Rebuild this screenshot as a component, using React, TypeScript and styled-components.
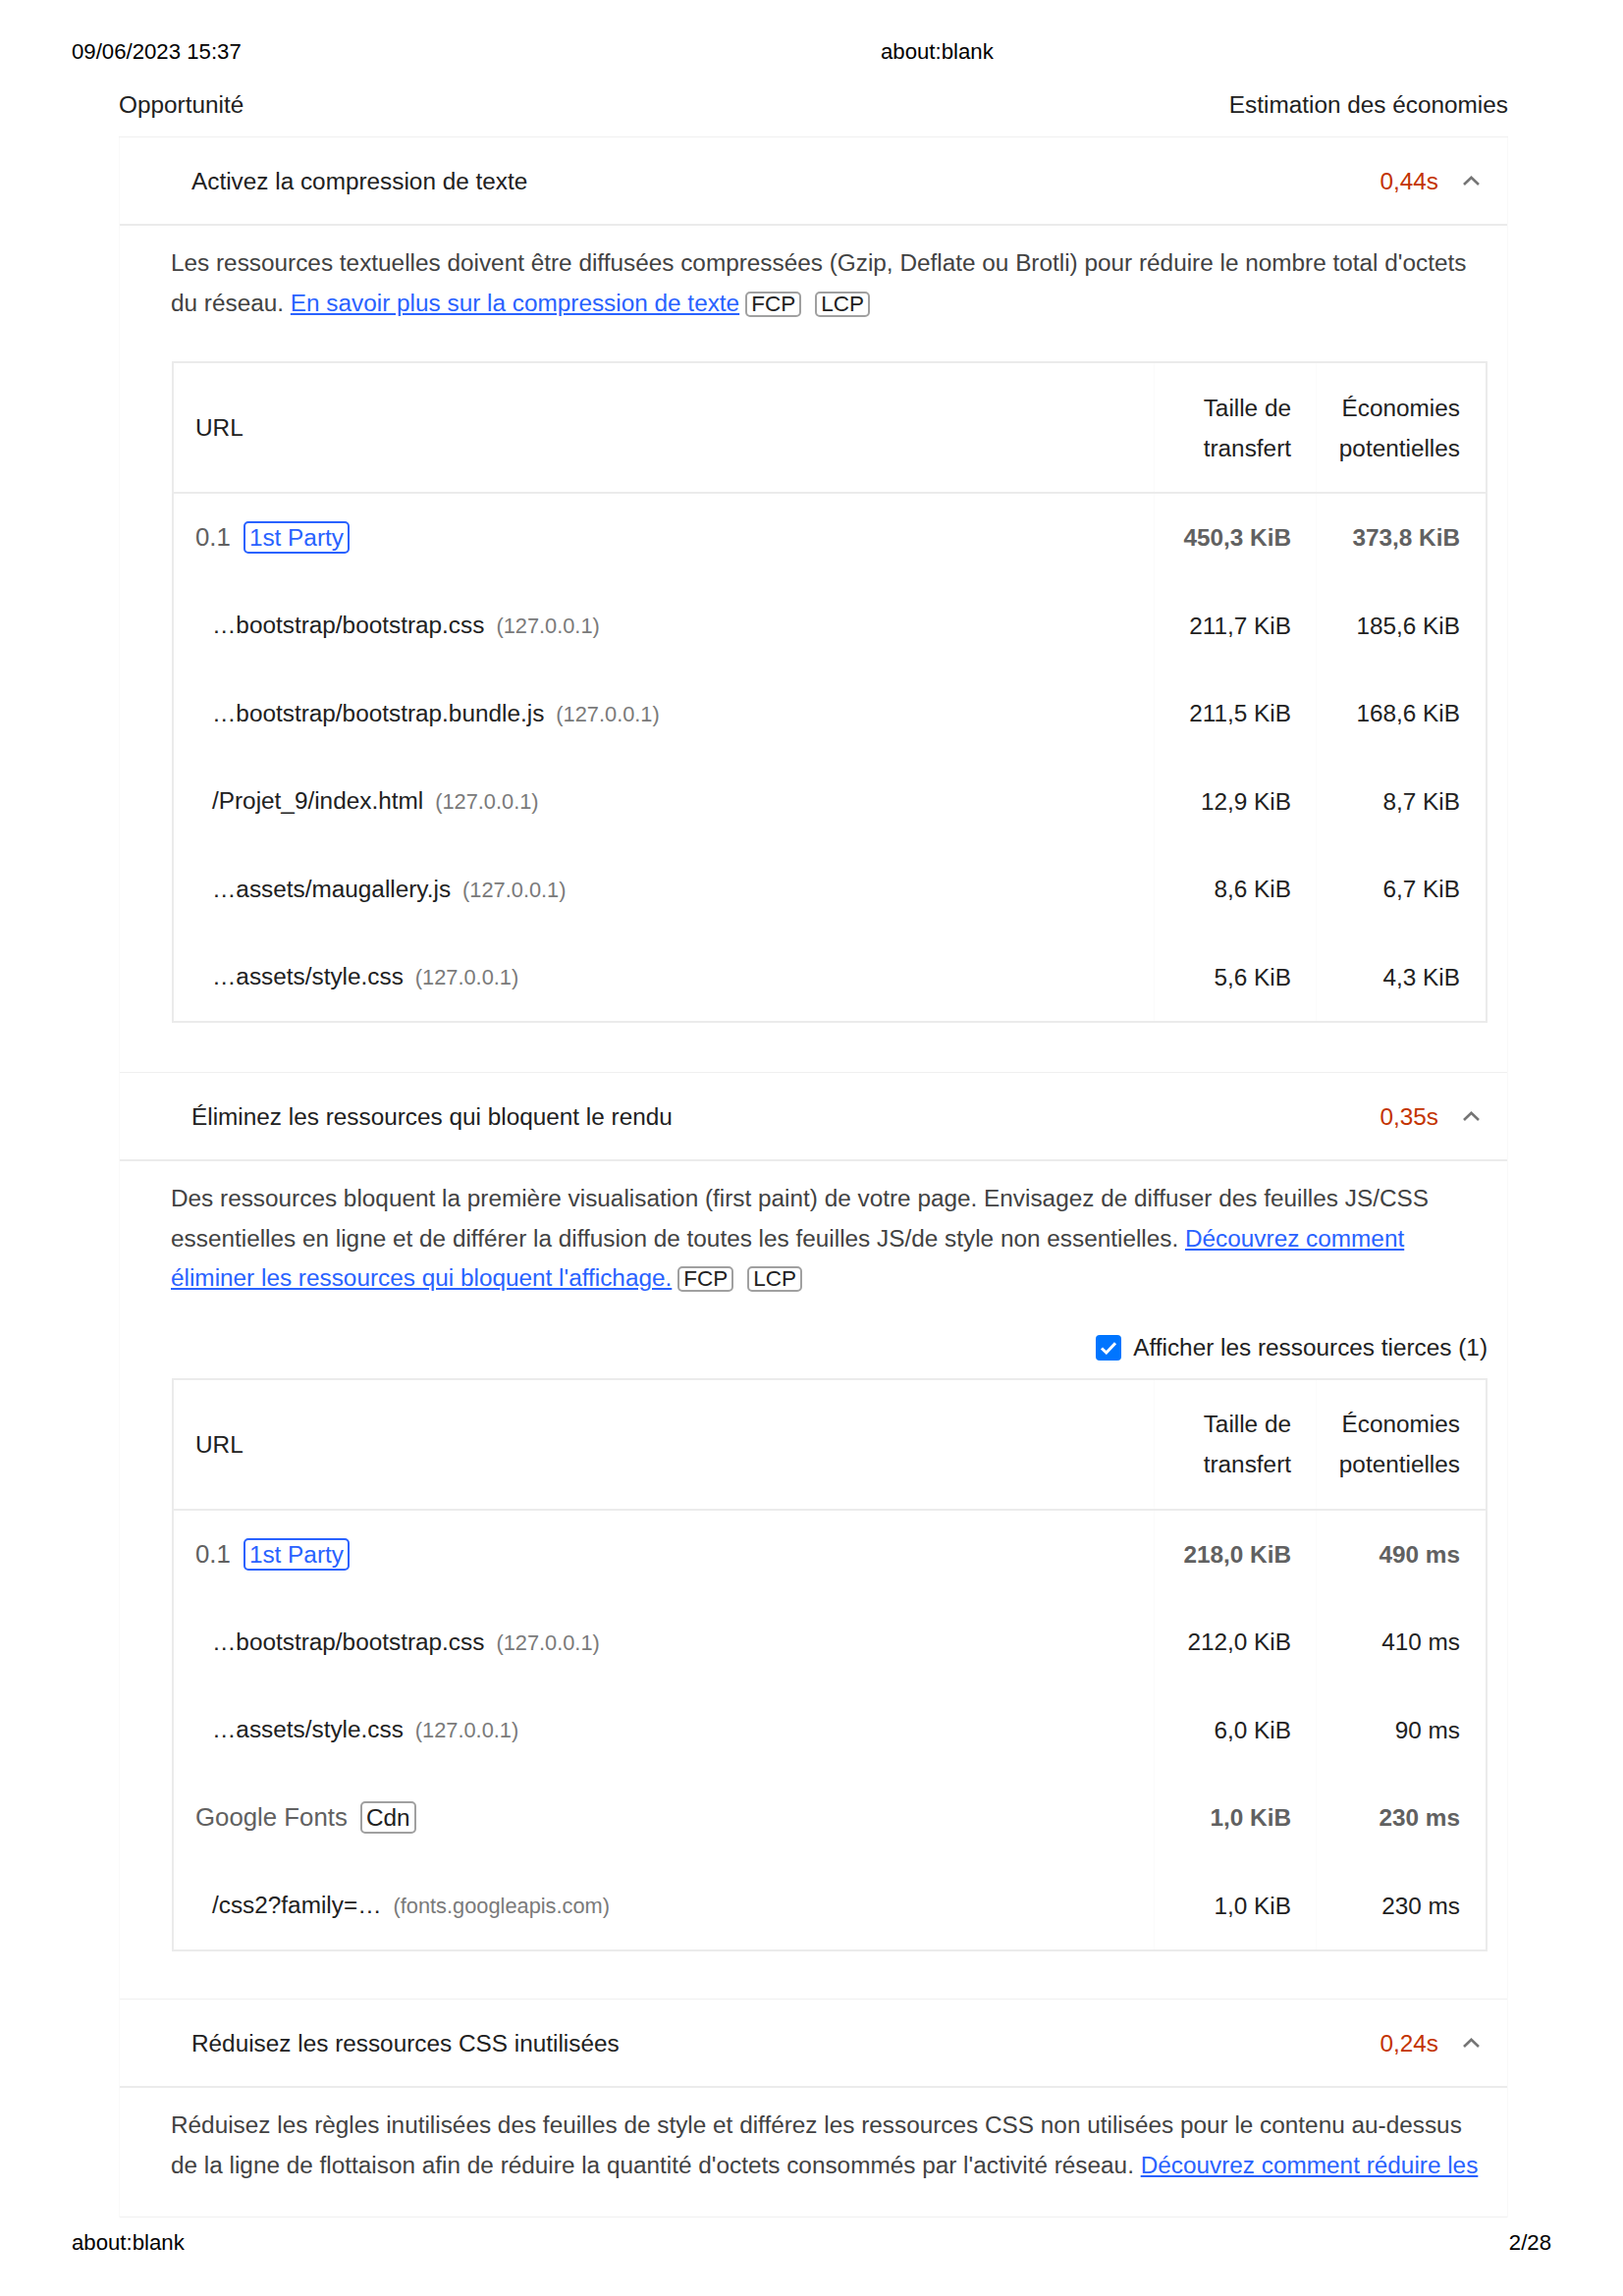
import React from 'react';
import styled, { createGlobalStyle } from 'styled-components';

const GlobalStyle = createGlobalStyle`
  html, body { margin: 0; padding: 0; background: #fff; }
  body { font-family: "Liberation Sans", Arial, Helvetica, sans-serif; color: #212121; }
  * { box-sizing: border-box; }
`;

const Page = styled.div`
  width: 1653px;
  height: 2339px;
  display: flex;
  flex-direction: column;
  overflow: hidden;
`;

const PrintBar = styled.div<{ $bottom?: boolean }>`
  display: grid;
  grid-template-columns: ${(p) => (p.$bottom ? '1fr auto' : '824px 1fr')};
  padding: ${(p) => (p.$bottom ? '0 73px 41px' : '40px 73px 0')};
  margin-top: ${(p) => (p.$bottom ? 'auto' : '0')};
  font-size: 22.2px;
  line-height: 26px;
  color: #000;
`;

const Content = styled.main`
  margin: 0 117px 0 121px;
  font-size: 24.35px;
`;

const GroupHeader = styled.div`
  display: flex;
  justify-content: space-between;
  padding: 20px 0 12px;
  line-height: 41px;
  color: #212121;
  border-bottom: 1px solid #f0f0f0;
`;

const AuditList = styled.div`
  border-left: 1px solid #f9f9f9;
  border-right: 1px solid #f9f9f9;
`;

const Audit = styled.section<{ $padBottom: number }>`
  padding-bottom: ${(p) => p.$padBottom}px;
  border-bottom: 1px solid #f0f0f0;
`;

const Summary = styled.div`
  display: flex;
  align-items: center;
  height: 90px;
  padding: 0 27px 0 73px;
  border-bottom: 2px solid #ebebeb;
  line-height: 41px;
`;

const SummaryTitle = styled.span`
  flex: 1;
  color: #212121;
`;

const SummaryValue = styled.span`
  color: #c33300;
  margin-right: 24px;
`;

const ChevronIcon = styled.svg`
  width: 19px;
  height: 12px;
  display: block;
`;

const Chevron = () => (
  <ChevronIcon viewBox="0 0 19 12" fill="none">
    <polyline points="2,10 9.5,2.8 17,10" stroke="#757575" strokeWidth="2.6" />
  </ChevronIcon>
);

const AuditBody = styled.div`
  padding: 18px 20px 0 52px;
`;

const Description = styled.p`
  margin: 0;
  font-size: 24.35px;
  line-height: 40.5px;
  color: #424242;
`;

const DocLink = styled.a`
  color: #2962ff;
  text-decoration: underline;
`;

const Adorn = styled.span`
  display: inline-block;
  border: 2px solid #a0a0a0;
  border-radius: 5px;
  margin: 0 7px;
  padding: 0 4px;
  font-size: 22.5px;
  line-height: 22px;
  color: #212121;
  &:first-of-type { margin-left: 6px; }
`;

const ThirdPartyToggle = styled.label`
  display: flex;
  justify-content: flex-end;
  align-items: center;
  gap: 12px;
  margin-top: 30px;
  height: 41px;
  color: #212121;
`;

const CheckBox = styled.span`
  width: 26px;
  height: 26px;
  border-radius: 4px;
  background: #0075ff;
  display: flex;
  align-items: center;
  justify-content: center;
`;

const Table = styled.div<{ $top: number }>`
  margin-top: ${(p) => p.$top}px;
  margin-left: 1px;
  border: 2px solid #ebebeb;
`;

const HeaderRow = styled.div`
  display: grid;
  grid-template-columns: 1fr 165px 173px;
  height: 133px;
  border-bottom: 2px solid #ebebeb;
  line-height: 41px;
  color: #212121;
`;

const Row = styled.div`
  display: grid;
  grid-template-columns: 1fr 165px 173px;
  height: 89.5px;
  line-height: 41px;
`;

const Cell = styled.div<{ $num?: boolean; $wide?: boolean; $indent?: boolean }>`
  display: flex;
  flex-direction: column;
  justify-content: center;
  align-items: ${(p) => (p.$num ? 'flex-end' : 'flex-start')};
  text-align: ${(p) => (p.$num ? 'right' : 'left')};
  padding: ${(p) => (p.$num ? (p.$wide ? '0 26px 0 0' : '0 25px 0 0') : p.$indent ? '0 0 0 39px' : '0 0 0 22px')};
  border-left: ${(p) => (p.$num ? '1px solid #fbfbfb' : 'none')};
`;

const EntityLine = styled.div`
  display: flex;
  align-items: center;
  color: #616161;
`;

const EntityName = styled.span`
  font-size: 25.8px;
`;

const EntityBadge = styled.span<{ $firstParty?: boolean }>`
  margin-left: 13px;
  padding: 0 4px;
  border: 2px solid ${(p) => (p.$firstParty ? '#2962ff' : '#a0a0a0')};
  border-radius: 5px;
  color: ${(p) => (p.$firstParty ? '#2962ff' : '#212121')};
  line-height: 29px;
`;

const UrlLine = styled.div`
  display: flex;
  align-items: baseline;
  color: #212121;
  white-space: nowrap;
`;

const Host = styled.span`
  margin-left: 12px;
  font-size: 21.8px;
  color: #7a7a7a;
`;

const Value = styled.span<{ $bold?: boolean }>`
  font-weight: ${(p) => (p.$bold ? 700 : 400)};
  color: ${(p) => (p.$bold ? '#616161' : '#212121')};
  white-space: nowrap;
`;

type Item =
  | { kind: 'entity'; name: string; badge: string; firstParty: boolean; a: string; b: string }
  | { kind: 'url'; url: string; host: string; a: string; b: string };

const compressionRows: Item[] = [
  { kind: 'entity', name: '0.1', badge: '1st Party', firstParty: true, a: '450,3 KiB', b: '373,8 KiB' },
  { kind: 'url', url: '…bootstrap/bootstrap.css', host: '(127.0.0.1)', a: '211,7 KiB', b: '185,6 KiB' },
  { kind: 'url', url: '…bootstrap/bootstrap.bundle.js', host: '(127.0.0.1)', a: '211,5 KiB', b: '168,6 KiB' },
  { kind: 'url', url: '/Projet_9/index.html', host: '(127.0.0.1)', a: '12,9 KiB', b: '8,7 KiB' },
  { kind: 'url', url: '…assets/maugallery.js', host: '(127.0.0.1)', a: '8,6 KiB', b: '6,7 KiB' },
  { kind: 'url', url: '…assets/style.css', host: '(127.0.0.1)', a: '5,6 KiB', b: '4,3 KiB' },
];

const blockingRows: Item[] = [
  { kind: 'entity', name: '0.1', badge: '1st Party', firstParty: true, a: '218,0 KiB', b: '490 ms' },
  { kind: 'url', url: '…bootstrap/bootstrap.css', host: '(127.0.0.1)', a: '212,0 KiB', b: '410 ms' },
  { kind: 'url', url: '…assets/style.css', host: '(127.0.0.1)', a: '6,0 KiB', b: '90 ms' },
  { kind: 'entity', name: 'Google Fonts', badge: 'Cdn', firstParty: false, a: '1,0 KiB', b: '230 ms' },
  { kind: 'url', url: '/css2?family=…', host: '(fonts.googleapis.com)', a: '1,0 KiB', b: '230 ms' },
];

const ResourceTable = ({ rows, top }: { rows: Item[]; top: number }) => (
  <Table $top={top}>
    <HeaderRow>
      <Cell>URL</Cell>
      <Cell $num>
        <span>Taille de</span>
        <span>transfert</span>
      </Cell>
      <Cell $num $wide>
        <span>Économies</span>
        <span>potentielles</span>
      </Cell>
    </HeaderRow>
    {rows.map((r, i) => (
      <Row key={i}>
        {r.kind === 'entity' ? (
          <Cell>
            <EntityLine>
              <EntityName>{r.name}</EntityName>
              <EntityBadge $firstParty={r.firstParty}>{r.badge}</EntityBadge>
            </EntityLine>
          </Cell>
        ) : (
          <Cell $indent>
            <UrlLine>
              {r.url}
              <Host>{r.host}</Host>
            </UrlLine>
          </Cell>
        )}
        <Cell $num>
          <Value $bold={r.kind === 'entity'}>{r.a}</Value>
        </Cell>
        <Cell $num $wide>
          <Value $bold={r.kind === 'entity'}>{r.b}</Value>
        </Cell>
      </Row>
    ))}
  </Table>
);

const AuditSummary = ({ title, value }: { title: string; value: string }) => (
  <Summary>
    <SummaryTitle>{title}</SummaryTitle>
    <SummaryValue>{value}</SummaryValue>
    <Chevron />
  </Summary>
);

export default function App() {
  return (
    <Page>
      <GlobalStyle />
      <PrintBar>
        <span>09/06/2023 15:37</span>
        <span>about:blank</span>
      </PrintBar>
      <Content>
        <GroupHeader>
          <span>Opportunité</span>
          <span>Estimation des économies</span>
        </GroupHeader>
        <AuditList>
          <Audit $padBottom={50}>
            <AuditSummary title="Activez la compression de texte" value="0,44s" />
            <AuditBody>
              <Description>
                Les ressources textuelles doivent être diffusées compressées (Gzip, Deflate ou Brotli) pour réduire le
                nombre total d'octets du réseau.{' '}
                <DocLink href="#">En savoir plus sur la compression de texte</DocLink>
                <Adorn>FCP</Adorn>
                <Adorn>LCP</Adorn>
              </Description>
              <ResourceTable rows={compressionRows} top={39} />
            </AuditBody>
          </Audit>
          <Audit $padBottom={48}>
            <AuditSummary title="Éliminez les ressources qui bloquent le rendu" value="0,35s" />
            <AuditBody>
              <Description>
                Des ressources bloquent la première visualisation (first paint) de votre page. Envisagez de diffuser des
                feuilles JS/CSS essentielles en ligne et de différer la diffusion de toutes les feuilles JS/de style non
                essentielles.{' '}
                <DocLink href="#">Découvrez comment éliminer les ressources qui bloquent l'affichage.</DocLink>
                <Adorn>FCP</Adorn>
                <Adorn>LCP</Adorn>
              </Description>
              <ThirdPartyToggle>
                <CheckBox>
                  <svg width="18" height="14" viewBox="0 0 18 14" fill="none">
                    <polyline points="2,7.5 6.8,12 16,2.2" stroke="#fff" strokeWidth="3" />
                  </svg>
                </CheckBox>
                <span>Afficher les ressources tierces (1)</span>
              </ThirdPartyToggle>
              <ResourceTable rows={blockingRows} top={10} />
            </AuditBody>
          </Audit>
          <Audit $padBottom={32}>
            <AuditSummary title="Réduisez les ressources CSS inutilisées" value="0,24s" />
            <AuditBody>
              <Description>
                Réduisez les règles inutilisées des feuilles de style et différez les ressources CSS non utilisées pour
                le contenu au-dessus de la ligne de flottaison afin de réduire la quantité d'octets consommés par
                l'activité réseau. <DocLink href="#">Découvrez comment réduire les</DocLink>
              </Description>
            </AuditBody>
          </Audit>
        </AuditList>
      </Content>
      <PrintBar $bottom>
        <span>about:blank</span>
        <span>2/28</span>
      </PrintBar>
    </Page>
  );
}
